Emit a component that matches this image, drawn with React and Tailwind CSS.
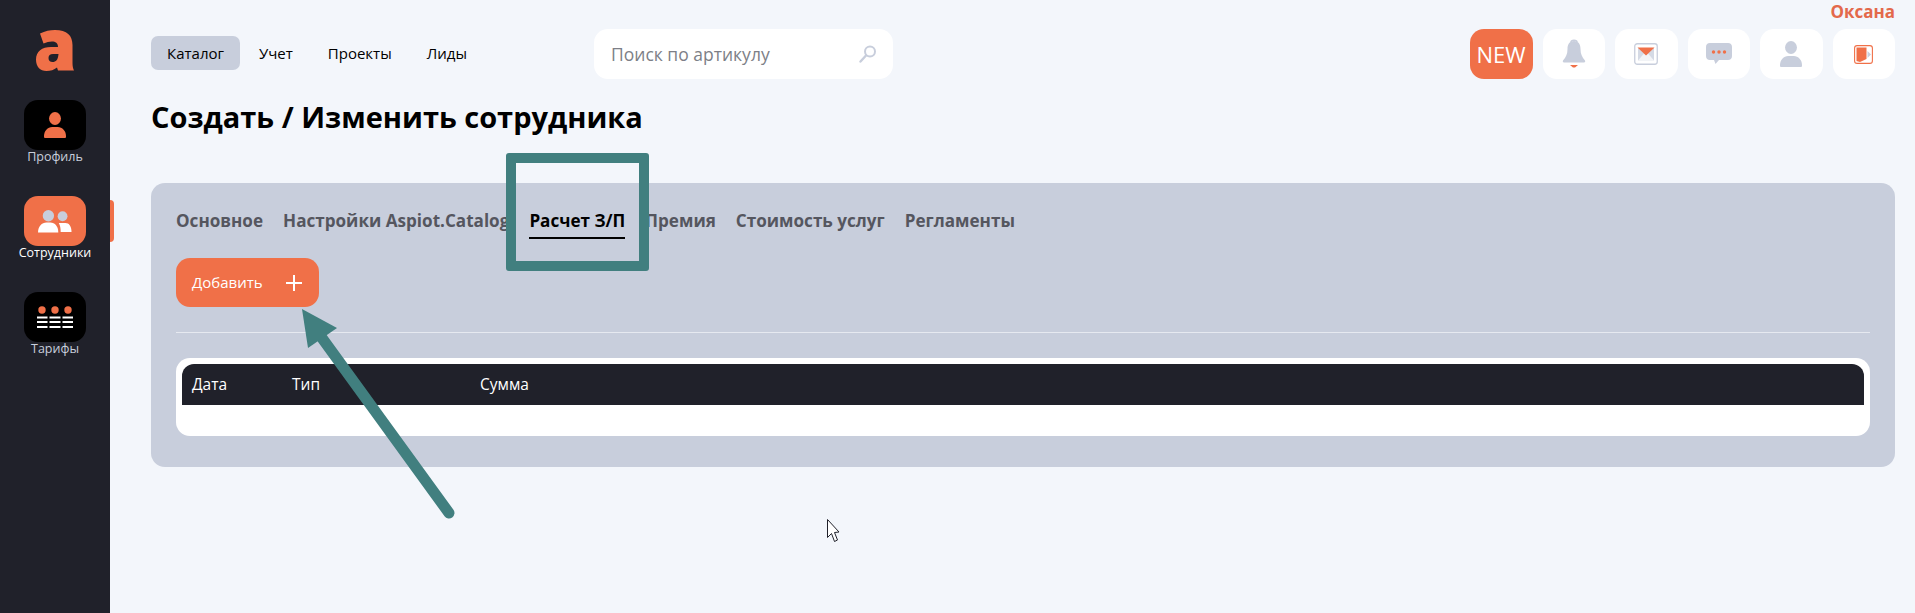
import React from "react";

const Logo = () => (
  <svg width="38" height="41" viewBox="0 0 38 41">
    <path
      fill="#f07048"
      fillRule="evenodd"
      d="M4 3.500 C9 1 14 0 19 0 C31 0 36.500 5.500 36.500 15 L36.500 33 C36.500 36 37 39 38 40.500 L22 40.500 L21 37.500 C18 40 14.500 41 10.500 41 C4 41 0 36.500 0 29.500 C0 21.500 6 17 15 17 L22 17 C22 13 19.500 11.500 16 11.500 C13 11.500 10.500 12.200 7.500 13.500 Z M22.500 24 L17 24 C14 24 12.500 25.500 12.500 28 C12.500 30.500 14 32 16.500 32 C20 32 22 30 22.500 24 Z"
    />
  </svg>
);

const PersonIcon = ({ color = "#f07048" }) => (
  <svg width="22" height="26" viewBox="0 0 24 26" preserveAspectRatio="none">
    <circle cx="12" cy="6.500" r="6.500" fill={color} />
    <path fill={color} d="M1 26 C0 26 0 25 0 24 C0 19 4 15 9 15 L15 15 C20 15 24 19 24 24 C24 25 24 26 23 26 Z" />
  </svg>
);

const TeamIcon = () => (
  <svg width="34" height="23" viewBox="0 0 36 24" preserveAspectRatio="none">
    <circle cx="11" cy="6" r="6" fill="#c8cedc" />
    <circle cx="26" cy="6.500" r="5.200" fill="#c8cedc" />
    <path fill="#fff" d="M0 23.500 C0 17 4 13 9 13 L13 13 C18 13 21.500 17 21.500 23.500 Z" />
    <path fill="#fff" d="M22 13.500 L29 13.500 C33 13.500 35.500 17 35.500 23 L24 23 C24 19 23.500 16 22 13.500 Z" />
  </svg>
);

const TariffIcon = () => (
  <svg width="36" height="23" viewBox="0 0 36 23">
    {[5, 18, 31].map((x) => (
      <g key={x}>
        <circle cx={x} cy="4" r="3.700" fill="#f07048" />
        <rect x={x - 5.500} y="10.500" width="11" height="2" fill="#fff" />
        <rect x={x - 5.500} y="15" width="11" height="2" fill="#fff" />
        <rect x={x - 5.500} y="20" width="11" height="2" fill="#fff" />
      </g>
    ))}
  </svg>
);

const BellIcon = () => (
  <svg width="24" height="32" viewBox="0 0 24 32">
    <path fill="none" stroke="#c8cedc" strokeWidth="1.500" d="M9 4 C9 1.500 15 1.500 15 4" />
    <path fill="#c8cedc" d="M12 3 C17 3 18.500 7 18.500 11 C18.500 16 20 19 23 22.500 C23.500 23.500 23 24.500 22 24.500 L2 24.500 C1 24.500 0.500 23.500 1 22.500 C4 19 5.500 16 5.500 11 C5.500 7 7 3 12 3 Z" />
    <path fill="#f07048" d="M8 27 L16 27 L13 29.500 L11 29.500 Z" />
  </svg>
);

const MailIcon = () => (
  <svg width="24" height="22" viewBox="0 0 24 22">
    <rect x="0.750" y="0.750" width="22.500" height="20.500" rx="2.500" fill="#fff" stroke="#c8cedc" strokeWidth="1.300" />
    <rect x="4" y="5" width="16" height="12.500" fill="#d5dae5" />
    <path fill="#fff" d="M4 17.500 L10 10.500 L12 12 L14 10.500 L20 17.500 Z" opacity="0.700" />
    <path fill="#f07048" d="M3.500 4.500 L20.500 4.500 L12 12.500 Z" />
  </svg>
);

const ChatIcon = () => (
  <svg width="26" height="22" viewBox="0 0 26 22">
    <path fill="#c8cedc" d="M4 0 L22 0 C24.500 0 26 1.500 26 4 L26 13 C26 15.500 24.500 17 22 17 L13 17 L9.500 21 L8 17 L4 17 C1.500 17 0 15.500 0 13 L0 4 C0 1.500 1.500 0 4 0 Z" />
    <circle cx="7.500" cy="9" r="1.700" fill="#f07048" />
    <circle cx="13" cy="9" r="1.700" fill="#f07048" />
    <circle cx="18.500" cy="9" r="1.700" fill="#f07048" />
  </svg>
);

const DoorIcon = () => (
  <svg width="19" height="19" viewBox="0 0 19 19">
    <rect x="0.600" y="0.600" width="17.800" height="17.800" rx="2.500" fill="none" stroke="#f07048" strokeWidth="1.100" />
    <path fill="#c8cedc" d="M13.500 6 L17 9.500 L13.500 13 Z" />
    <path fill="#f07048" d="M2.500 2.500 L12.500 2.500 L12.500 14 L6 17 L2.500 16 Z" />
  </svg>
);

const SearchIcon = () => (
  <svg width="18" height="18" viewBox="0 0 18 18" fill="none" stroke="#c8cedc">
    <circle cx="11" cy="6.500" r="5" strokeWidth="2" />
    <path d="M7 10.500 L1.500 16.500" strokeWidth="2.400" strokeLinecap="round" />
  </svg>
);

function SideItem({ label, active, children }) {
  return (
    <div className="relative flex w-full flex-col items-center">
      <div className={`flex h-[50px] w-[62px] items-center justify-center rounded-[14px] ${active ? "bg-[#f07048]" : "bg-black"}`}>
        {children}
      </div>
      <span className={`mt-[-1px] text-[12.500px] leading-[16px] ${active ? "text-white" : "text-[#c8cedc]"}`}>{label}</span>
      {active && <div className="absolute right-[-4px] top-[4px] h-[42px] w-[4px] rounded-r bg-[#f07048]" />}
    </div>
  );
}

function IconTile({ children }) {
  return <div className="flex h-[50px] w-[62.500px] items-center justify-center rounded-[14px] bg-white">{children}</div>;
}

export default function App() {
  return (
    <div className="relative flex h-screen overflow-hidden bg-[#f3f6fb] font-['Open_Sans',sans-serif] text-black">
      {/* Sidebar */}
      <aside className="flex w-[110px] shrink-0 flex-col items-center bg-[#20212a] pt-[30px]">
        <Logo />
        <nav className="mt-[29px] flex w-full flex-col gap-[31px]">
          <SideItem label="Профиль"><PersonIcon /></SideItem>
          <SideItem label="Сотрудники" active><TeamIcon /></SideItem>
          <SideItem label="Тарифы"><TariffIcon /></SideItem>
        </nav>
      </aside>

      {/* Main */}
      <main className="min-w-0 flex-1 pl-[41px] pr-[20px]">
        <header className="flex h-[79px] items-end">
          <nav className="mb-[9px] flex h-[34px] w-[316px] items-center gap-[3px] text-[15px]">
            <a className="flex h-full items-center rounded-[7px] bg-[#c8cedc] px-[16px]">Каталог</a>
            <a className="px-[16px]">Учет</a>
            <a className="px-[16px]">Проекты</a>
            <a className="px-[16px]">Лиды</a>
          </nav>
          <div className="ml-[127px] flex h-[50px] w-[299px] items-center justify-between rounded-[14px] bg-white pl-[17px] pr-[16px]">
            <span className="text-[17.500px] text-[#7d7f87]">Поиск по артикулу</span>
            <SearchIcon />
          </div>
          <div className="ml-auto flex flex-col items-end">
            <span className="mb-[5px] text-[17px] font-bold leading-[24px] text-[#e3694b]">Оксана</span>
            <div className="flex gap-[10px]">
              <div className="flex h-[50px] w-[63px] items-center justify-center rounded-[14px] bg-[#f07048] text-[22px] text-white">NEW</div>
              <IconTile><BellIcon /></IconTile>
              <IconTile><MailIcon /></IconTile>
              <IconTile><ChatIcon /></IconTile>
              <IconTile><PersonIcon color="#c8cedc" /></IconTile>
              <IconTile><DoorIcon /></IconTile>
            </div>
          </div>
        </header>

        <h1 className="mt-[19px] text-[29px] font-bold leading-[38px]">Создать / Изменить сотрудника</h1>

        <section className="mt-[47px] h-[284px] rounded-[14px] bg-[#c8cedc] px-[25px] pt-[25px]">
          <div className="flex gap-[20px] text-[17.100px] font-bold leading-[26px] text-[#55565f]">
            <span>Основное</span>
            <span>Настройки Aspiot.Catalog</span>
            <span className="border-b-2 border-black pb-[3px] text-black">Расчет З/П</span>
            <span>Премия</span>
            <span>Стоимость услуг</span>
            <span>Регламенты</span>
          </div>
          <button className="mt-[19px] flex h-[49px] w-[143px] items-center justify-between rounded-[14px] bg-[#f07048] pl-[16px] pr-[16px] text-[15px] text-white">
            Добавить
            <svg width="18" height="18" viewBox="0 0 18 18" stroke="#fff" strokeWidth="2">
              <path d="M9 1 V17 M1 9 H17" />
            </svg>
          </button>
          <div className="mt-[25px] h-px bg-[#e6e9f0]" />
          <div className="mt-[25px] h-[78px] rounded-[14px] bg-white px-[6px] pt-[6px]">
            <div className="flex h-[41px] items-center rounded-t-[12px] bg-[#20212a] pl-[10px] text-[15.500px] font-medium text-white">
              <span className="w-[100px]">Дата</span>
              <span className="w-[188px]">Тип</span>
              <span>Сумма</span>
            </div>
          </div>
        </section>
      </main>

      {/* Annotation overlays */}
      <div className="absolute left-[506px] top-[153px] h-[118px] w-[143px] rounded-[3px] border-[10px] border-[#417f7f]" />
      <svg className="absolute left-0 top-0" width="1915" height="613">
        <path d="M449 513 L322 338" fill="none" stroke="#417f7f" strokeWidth="11" strokeLinecap="round" />
        <path d="M302 309 L337 328 L308 348 Z" fill="#417f7f" />
        <path d="M827.500 519.500 L827.500 537.500 L831.500 533.500 L834.500 541.500 L837.500 540 L834.500 532.500 L839 532 Z" fill="#fff" stroke="#20212a" strokeWidth="1" />
      </svg>
    </div>
  );
}
